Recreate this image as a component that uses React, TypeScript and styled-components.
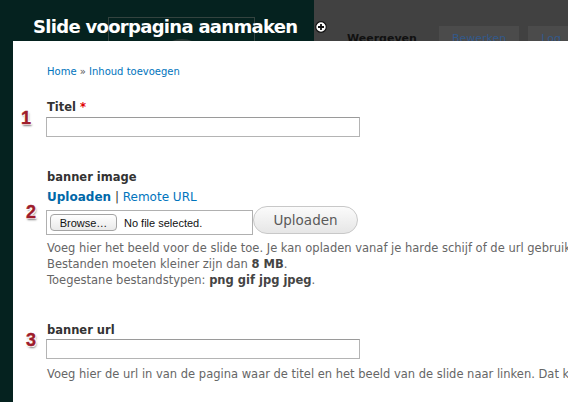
import React from "react";
import styled, { createGlobalStyle } from "styled-components";

const Global = createGlobalStyle`
  html, body { margin: 0; padding: 0; }
  body { width: 568px; height: 402px; overflow: hidden; background: #05221f; }
  * { box-sizing: border-box; }
`;

const Page = styled.div`
  width: 568px;
  height: 402px;
  background: #05221f;
  display: flex;
  flex-direction: column;
  overflow: hidden;
  font-family: "DejaVu Sans", Verdana, sans-serif;
`;

const Header = styled.header`
  height: 41px;
  flex: none;
  display: flex;
  overflow: hidden;
`;

const TitleArea = styled.div`
  position: relative;
  width: 314px;
  flex: none;
  background: #05221f;
  padding: 16px 0 0 33px;
`;

const LogoFrame = styled.div`
  position: absolute;
  left: 108px;
  top: 17px;
  width: 147px;
  height: 40px;
  border: 1px solid #34433f;
  overflow: hidden;
  &::after {
    content: "";
    position: absolute;
    left: 48px;
    top: 21px;
    width: 46px;
    height: 46px;
    border-radius: 50%;
    border: 2px solid #2e3c39;
  }
`;

const Title = styled.h1`
  position: relative;
  margin: 0;
  font-family: "DejaVu Sans", Verdana, sans-serif;
  font-weight: bold;
  font-size: 18px;
  line-height: 22px;
  letter-spacing: -0.7px;
  color: #ffffff;
  white-space: nowrap;
`;

const TabBar = styled.div`
  flex: 1;
  background: #414141;
  display: flex;
  align-items: flex-start;
`;

const PlusIcon = styled.svg`
  flex: none;
  margin: 21px 0 0 1px;
`;

const Tabs = styled.nav`
  display: flex;
  gap: 9px;
  margin: 26px 0 0 7px;
`;

const Tab = styled.span<{ $active?: boolean }>`
  display: block;
  height: 20px;
  padding: 5px 13px 0;
  font-size: 11px;
  line-height: 15px;
  white-space: nowrap;
  font-weight: ${(p) => (p.$active ? "bold" : "normal")};
  color: ${(p) => (p.$active ? "#111111" : "#33598a")};
  background: ${(p) => (p.$active ? "transparent" : "#4b4b4b")};
`;

const Body = styled.div`
  flex: 1;
  display: flex;
`;

const Panel = styled.main`
  flex: 1;
  margin-left: 13px;
  background: #ffffff;
  padding: 24px 0 0 33px;
  overflow: hidden;
`;

const Breadcrumb = styled.div`
  font-size: 10px;
  line-height: 14px;
  color: #0074bd;
  padding-left: 1px;
  & span { color: #555; }
`;

const Field = styled.div<{ $gap: number }>`
  position: relative;
  margin-top: ${(p) => p.$gap}px;
`;

const Label = styled.div`
  font-size: 11.5px;
  font-weight: bold;
  line-height: 16px;
  color: #333333;
  padding-left: 1px;
  & em { font-style: normal; color: #e00000; }
`;

const Badge = styled.span<{ $top: number; $left: number }>`
  position: absolute;
  top: ${(p) => p.$top}px;
  left: ${(p) => p.$left}px;
  font-family: "Liberation Sans", Arial, sans-serif;
  font-weight: bold;
  font-size: 18px;
  line-height: 18px;
  color: #9e1c2b;
  -webkit-text-stroke: 0.4px #9e1c2b;
  text-shadow: -1px -1px 0 #fff, 1px -1px 0 #fff, -1px 1px 0 #fff, 1px 1px 0 #fff,
    1px 2px 2px rgba(0, 0, 0, 0.5);
`;

const TextInput = styled.div<{ $gap: number }>`
  width: 314px;
  height: 20px;
  margin-top: ${(p) => p.$gap}px;
  border: 1px solid #b4b4b4;
  border-top-color: #9a9a9a;
  background: #fff;
`;

const LinkRow = styled.div`
  margin-top: 4px;
  font-size: 12px;
  line-height: 16px;
  color: #333;
  padding-left: 1px;
  & a { color: #0074bd; text-decoration: none; }
  & b { color: #0068a8; }
`;

const UploadRow = styled.div`
  display: flex;
  align-items: flex-start;
  margin-top: 1px;
`;

const FileBox = styled.div`
  width: 207px;
  height: 25px;
  margin-top: 4px;
  border: 1px solid #b0b0b0;
  display: flex;
  align-items: center;
  padding-left: 3px;
  gap: 7px;
  font-family: "Liberation Sans", Arial, sans-serif;
  font-size: 11px;
  color: #111;
`;

const BrowseButton = styled.span`
  height: 17px;
  width: 67px;
  border: 1px solid #a4a4a4;
  border-radius: 4px;
  background: linear-gradient(#ffffff, #e9e9e9);
  display: flex;
  align-items: center;
  justify-content: center;
  font-size: 11px;
  color: #111;
`;

const SubmitButton = styled.span`
  width: 105px;
  height: 28px;
  border: 1px solid #c8c8c8;
  border-radius: 14px;
  background: linear-gradient(#fbfbfb, #e6e6e6);
  display: flex;
  align-items: center;
  justify-content: center;
  font-size: 13.5px;
  color: #5a5a5a;
`;

const Description = styled.div<{ $gap: number }>`
  margin-top: ${(p) => p.$gap}px;
  font-size: 11.5px;
  line-height: 16px;
  color: #666666;
  white-space: nowrap;
  padding-left: 1px;
  & b { color: #444; }
`;

function Plus() {
  return (
    <PlusIcon width="12" height="12" viewBox="0 0 12 12">
      <circle cx="6" cy="6" r="5.3" fill="#ffffff" stroke="#111" strokeWidth="1.2" />
      <path d="M6 3v6M3 6h6" stroke="#111" strokeWidth="1.8" />
    </PlusIcon>
  );
}

export default function App() {
  return (
    <>
      <Global />
      <Page>
        <Header>
          <TitleArea>
            <LogoFrame />
            <Title>Slide voorpagina aanmaken</Title>
          </TitleArea>
          <TabBar>
            <Plus />
            <Tabs>
              <Tab $active>Weergeven</Tab>
              <Tab>Bewerken</Tab>
              <Tab>Log</Tab>
            </Tabs>
          </TabBar>
        </Header>
        <Body>
          <Panel>
            <Breadcrumb>
              Home <span>»</span> Inhoud toevoegen
            </Breadcrumb>

            <Field $gap={20}>
              <Badge $top={10} $left={-25}>1</Badge>
              <Label>
                Titel <em>*</em>
              </Label>
              <TextInput $gap={2} />
            </Field>

            <Field $gap={32}>
              <Badge $top={34} $left={-20}>2</Badge>
              <Label>banner image</Label>
              <LinkRow>
                <b>Uploaden</b> | <a>Remote URL</a>
              </LinkRow>
              <UploadRow>
                <FileBox>
                  <BrowseButton>Browse…</BrowseButton>
                  No file selected.
                </FileBox>
                <SubmitButton>Uploaden</SubmitButton>
              </UploadRow>
              <Description $gap={5}>
                Voeg hier het beeld voor de slide toe. Je kan opladen vanaf je harde schijf of de url gebruiken van een beeld op het internet.
                <br />
                Bestanden moeten kleiner zijn dan <b>8 MB</b>.
                <br />
                Toegestane bestandstypen: <b>png gif jpg jpeg</b>.
              </Description>
            </Field>

            <Field $gap={34}>
              <Badge $top={9} $left={-20}>3</Badge>
              <Label>banner url</Label>
              <TextInput $gap={1} />
              <Description $gap={7}>
                Voeg hier de url in van de pagina waar de titel en het beeld van de slide naar linken. Dat kan een interne of externe pagina zijn.
              </Description>
            </Field>
          </Panel>
        </Body>
      </Page>
    </>
  );
}
